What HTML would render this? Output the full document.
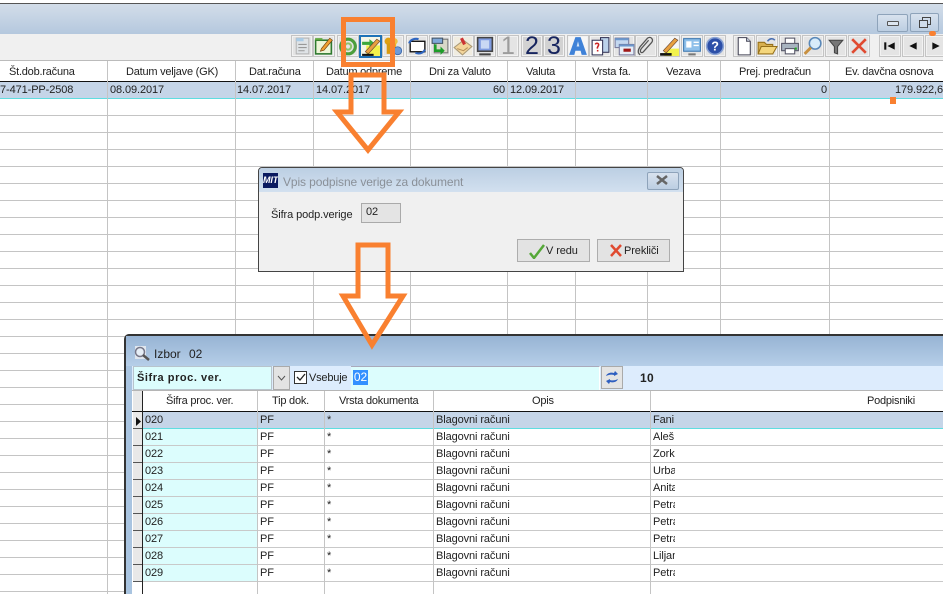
<!DOCTYPE html>
<html><head><meta charset="utf-8"><style>
html,body{margin:0;padding:0;background:#fff}
#p{position:relative;width:943px;height:594px;overflow:hidden;background:#fff;font:11px "Liberation Sans",sans-serif;color:#222;letter-spacing:-.1px}
#p div,#p svg,#p span{position:absolute}
.t{white-space:nowrap;line-height:14px}
.hd{letter-spacing:-.22px}
.n{width:22px;overflow:hidden}
.c{text-align:center}
.b{width:20px;height:20px;top:35px;background:#e4e4e4;border:1px solid #c4c4c4;box-shadow:inset 0 0 0 1px #f2f2f2}
.b svg{left:-1px;top:-1px;width:22px;height:22px}
.d{letter-spacing:0;font-size:25px;line-height:21px;text-align:center;overflow:hidden}
.v{width:1px;background:#c4c4c4}
.h{height:1px;background:#c4c4c4}
</style></head><body><div id="p">
<!-- top bar -->
<div style="left:0;top:0;width:943px;height:3px;background:#fff"></div>
<div style="left:0;top:3px;width:943px;height:1px;background:#555"></div>
<div style="left:0;top:4px;width:943px;height:30px;background:linear-gradient(#d3dde9,#b5c8de)"></div>
<div style="left:0;top:34px;width:943px;height:26px;background:#f0f0f0"></div>
<div style="left:0;top:60px;width:943px;height:1px;background:#bbb"></div>
<div style="left:877px;top:14px;width:29px;height:16px;border:1px solid #8ea3ba;border-radius:2px;background:linear-gradient(#d8e2ee,#bccee2)"></div>
<div style="left:887px;top:21px;width:10px;height:3px;border:1px solid #555;border-radius:1px;background:#dde6f0"></div>
<div style="left:910px;top:13px;width:27px;height:17px;border:1px solid #8ea3ba;border-radius:2px;background:linear-gradient(#d8e2ee,#bccee2)"></div>
<div style="left:922px;top:17px;width:7px;height:6px;border:1px solid #444"></div>
<div style="left:919px;top:20px;width:7px;height:6px;border:1px solid #444;background:#d0dcea"></div>
<!-- toolbar -->
<div class="b" style="left:291px"><svg viewBox="0 0 21 21"><rect x="5" y="3" width="12" height="15" fill="#dfe3e6" stroke="#b5b5b5"/><rect x="5" y="3" width="7" height="3" fill="#a9cbe6"/><path d="M7 9h8M7 12h8M7 15h6" stroke="#999"/></svg></div>
<div class="b" style="left:313px"><svg viewBox="0 0 21 21"><rect x="2.500" y="5" width="15" height="13" fill="#eef6d8" stroke="#2f7a2f" stroke-width="1.500"/><path d="M2 5h7V3H2z" fill="#5fa83f"/><path d="M8 13l8-10 2.500 2-8 9.500-3.500 1z" fill="#f0a030" stroke="#704010" stroke-width=".6"/></svg></div>
<div class="b" style="left:337px"><svg viewBox="0 0 21 21"><circle cx="10.500" cy="11" r="7" fill="none" stroke="#4c9e3c" stroke-width="3"/><circle cx="10.500" cy="11" r="3" fill="none" stroke="#8cc56c" stroke-width="2"/></svg></div>
<div class="b" style="left:359px;width:19px;height:19px;border:2px solid #1e72b8;background:#f6f6e8;box-shadow:none"><svg viewBox="0 0 21 21" style="left:-1px;top:-1px"><rect x="6" y="9" width="13" height="10" fill="#f2f24a"/><path d="M2 7h8" stroke="#3ca83c" stroke-width="3"/><path d="M9 3l5 4-5 4z" fill="#3ca83c"/><path d="M5 15L16 3l3 2L8 17z" fill="#e8a040" stroke="#643" stroke-width=".6"/><path d="M2 18h11" stroke="#111" stroke-width="2"/></svg></div>
<div class="b" style="left:382px"><svg viewBox="0 0 21 21"><circle cx="6" cy="6" r="3.500" fill="#e0a010"/><rect x="4.500" y="8" width="3.500" height="10" fill="#d89a10"/><circle cx="12" cy="6" r="3" fill="#f0c040"/><rect x="10.500" y="8" width="3" height="6" fill="#e8b428"/><circle cx="15" cy="15" r="3.800" fill="#6f9ad6" stroke="#3a66aa" stroke-width=".8"/></svg></div>
<div class="b" style="left:406px"><svg viewBox="0 0 21 21"><rect x="4" y="6" width="14" height="10" fill="#fff" stroke="#111" stroke-width="1.300"/><path d="M3 8c1-4 6-5 9-4M18 14c-2 4-6 4-9 3" fill="none" stroke="#2f66c0" stroke-width="2"/></svg></div>
<div class="b" style="left:429px"><svg viewBox="0 0 21 21"><path d="M5 4h13v13H5z" fill="#d8d8c8" stroke="#777"/><rect x="3" y="3" width="10" height="5" fill="#7fa8d8" stroke="#456"/><path d="M6 9v6h7" stroke="#1d9d2a" stroke-width="2.500" fill="none"/><path d="M11 11l4 4-4 4z" fill="#1d9d2a"/></svg></div>
<div class="b" style="left:452px;background:#f0ece0"><svg viewBox="0 0 21 21"><path d="M2 12l9-7 8 6-9 8z" fill="#f3d59a" stroke="#a97"/><path d="M9 3l3 6" stroke="#c33" stroke-width="3"/><path d="M5 13l6 2 4-3" stroke="#b8915a" fill="none"/></svg></div>
<div class="b" style="left:474px"><svg viewBox="0 0 21 21"><rect x="3.500" y="2.500" width="14" height="13" fill="#7f9be0" stroke="#444" stroke-width="1.500"/><rect x="6.500" y="5" width="8" height="8" fill="#c9d8f4"/><path d="M5 18.500h11" stroke="#444" stroke-width="2"/></svg></div>
<div class="b t d" style="left:497px;color:#9c9c9c">1</div>
<div class="b t d" style="left:521px;color:#16245e;background:#d2d2d2">2</div>
<div class="b t d" style="left:543px;color:#16245e;background:#d2d2d2">3</div>
<div class="b" style="left:567px;background:#f6f6f6"><svg viewBox="0 0 21 21"><path d="M2 19L8 2h5l6 17h-5l-1-4H8l-1 4z" fill="#3f82d8"/><path d="M9.200 11h2.600L10.500 6z" fill="#cfe2f8"/></svg></div>
<div class="b" style="left:589px"><svg viewBox="0 0 21 21"><rect x="11" y="2.500" width="8" height="14" fill="#bcd2ea" stroke="#335"/><rect x="3" y="5" width="10" height="14" fill="#fff" stroke="#335"/><path d="M6 9c1-2 4-1 3 1l-1 2v1" fill="none" stroke="#c22" stroke-width="1.500"/><path d="M7.500 15h1.500" stroke="#c22" stroke-width="1.500"/></svg></div>
<div class="b" style="left:613px"><svg viewBox="0 0 21 21"><rect x="2" y="3" width="13" height="9" fill="#c4d8f0" stroke="#779"/><rect x="2" y="3" width="13" height="2" fill="#6c97cc"/><rect x="6" y="9" width="14" height="10" fill="#e6eef8" stroke="#779"/><rect x="6" y="9" width="14" height="2" fill="#6c97cc"/><rect x="10" y="13" width="7" height="3" fill="#a01818"/></svg></div>
<div class="b" style="left:635px"><svg viewBox="0 0 21 21"><path d="M5 19c-3-2-2-5 0-8l7-8c3-2 6 1 4 4l-8 9c-2 2-4 0-2-3l7-8" fill="none" stroke="#555" stroke-width="1.200"/></svg></div>
<div class="b" style="left:658px;background:#f6f6f6"><svg viewBox="0 0 21 21"><rect x="6" y="13" width="14" height="7" fill="#f3f34c"/><path d="M5 15L16 3l3 2L8 17z" fill="#e8a040" stroke="#643" stroke-width=".6"/><path d="M2 18.500h11" stroke="#111" stroke-width="2.500"/></svg></div>
<div class="b" style="left:681px"><svg viewBox="0 0 21 21"><rect x="2.500" y="3.500" width="16" height="12" fill="#8fc0ea" stroke="#3a76b0"/><rect x="5" y="6" width="5" height="6" fill="#fff"/><path d="M12 7h5M12 10h5" stroke="#fff" stroke-width="1.300"/><path d="M7 18.500h7" stroke="#777" stroke-width="2"/></svg></div>
<div class="b" style="left:704px"><svg viewBox="0 0 21 21"><circle cx="10.500" cy="10.500" r="8" fill="#2c4fa8" stroke="#8aa3d4" stroke-width="1.500"/><text x="10.500" y="15" text-anchor="middle" font-family="Liberation Sans" font-weight="bold" font-size="12" fill="#fff">?</text></svg></div>
<div class="b" style="left:733px"><svg viewBox="0 0 21 21"><path d="M5 2.500h8l3.500 3.500v13H5z" fill="#fff" stroke="#445"/><path d="M13 2.500V6h3.500" fill="#d8e2f0" stroke="#445"/></svg></div>
<div class="b" style="left:756px"><svg viewBox="0 0 21 21"><path d="M2 7h6l2 2h6v9H2z" fill="#d8b050" stroke="#96701a"/><path d="M5 11h15l-4 7H2z" fill="#f4d67c" stroke="#96701a"/><path d="M11 6c2-3 5-3 7-1" fill="none" stroke="#4a6fb0" stroke-width="1.500"/></svg></div>
<div class="b" style="left:779px"><svg viewBox="0 0 21 21"><rect x="6" y="3" width="9" height="6" fill="#fff" stroke="#556"/><rect x="2.500" y="8" width="16" height="7" fill="#a8b4c0" stroke="#556"/><rect x="6" y="13" width="9" height="5" fill="#fff" stroke="#556"/><rect x="15" y="12" width="2" height="2" fill="#2a2"/></svg></div>
<div class="b" style="left:802px"><svg viewBox="0 0 21 21"><circle cx="12.500" cy="8" r="5.500" fill="#d8ecfa" stroke="#5a88b8" stroke-width="1.500"/><path d="M8.500 12l-6 6" stroke="#c89040" stroke-width="2.800"/></svg></div>
<div class="b" style="left:825px"><svg viewBox="0 0 21 21"><path d="M4 5h13l-5 6v7l-3-1v-6z" fill="#777" stroke="#444"/></svg></div>
<div class="b" style="left:848px"><svg viewBox="0 0 21 21"><path d="M4 4l13 13M17 4L4 17" stroke="#e04a30" stroke-width="2.500"/></svg></div>
<div class="b" style="left:879px"><svg viewBox="0 0 21 21"><path d="M6 7v7" stroke="#111" stroke-width="2"/><path d="M15 7v7l-7-3.500z" fill="#111"/></svg></div>
<div class="b" style="left:902px"><svg viewBox="0 0 21 21"><path d="M14 7v7l-7-3.500z" fill="#111"/></svg></div>
<div class="b" style="left:925px"><svg viewBox="0 0 21 21"><path d="M7 7v7l7-3.500z" fill="#111"/></svg></div>
<!-- top grid -->
<div style="left:0;top:61px;width:943px;height:20px;background:#fff"></div>
<div style="left:0;top:81px;width:943px;height:1px;background:#111"></div>
<div style="left:0;top:82px;width:943px;height:16px;background:#c5d5e8"></div>
<div style="left:0;top:98px;width:943px;height:1px;background:#5fdde0"></div>
<div style="left:0;top:99px;width:943px;height:495px;background:repeating-linear-gradient(#fff 0 16px,#c4c4c4 16px 17px)"></div>
<div class="v" style="left:107px;top:61px;height:533px"></div>
<div class="v" style="left:235px;top:61px;height:533px"></div>
<div class="v" style="left:313px;top:61px;height:533px"></div>
<div class="v" style="left:410px;top:61px;height:533px"></div>
<div class="v" style="left:507px;top:61px;height:533px"></div>
<div class="v" style="left:575px;top:61px;height:533px"></div>
<div class="v" style="left:647px;top:61px;height:533px"></div>
<div class="v" style="left:720px;top:61px;height:533px"></div>
<div class="v" style="left:829px;top:61px;height:533px"></div>
<div class="t hd" style="left:9px;top:65px">Št.dob.računa</div>
<div class="t hd" style="left:126px;top:65px">Datum veljave (GK)</div>
<div class="t hd" style="left:249px;top:65px">Dat.računa</div>
<div class="t hd" style="left:326px;top:65px">Datum odpreme</div>
<div class="t hd" style="left:429px;top:65px">Dni za Valuto</div>
<div class="t hd" style="left:526px;top:65px">Valuta</div>
<div class="t hd" style="left:592px;top:65px">Vrsta fa.</div>
<div class="t hd" style="left:666px;top:65px">Vezava</div>
<div class="t hd" style="left:739px;top:65px">Prej. predračun</div>
<div class="t hd" style="left:845px;top:65px">Ev. davčna osnova</div>
<div class="t" style="left:0;top:83px">7-471-PP-2508</div>
<div class="t" style="left:110px;top:83px">08.09.2017</div>
<div class="t" style="left:237px;top:83px">14.07.2017</div>
<div class="t" style="left:316px;top:83px">14.07.2017</div>
<div class="t" style="left:493px;top:83px">60</div>
<div class="t" style="left:510px;top:83px">12.09.2017</div>
<div class="t" style="left:821px;top:83px">0</div>
<div class="t" style="left:895px;top:83px">179.922,6</div>
<!-- dialog -->
<div style="left:258px;top:167px;width:424px;height:103px;border:1px solid #444;border-radius:4px 4px 0 0;background:#f0f0f0;overflow:hidden">
<div style="left:0;top:0;width:424px;height:24px;background:linear-gradient(#bccfe3,#d2e0ef)"></div>
</div>
<div class="t" style="left:263px;top:173px;width:15px;height:15px;background:#0a1a60;color:#fff;font:italic bold 9px/15px 'Liberation Sans',sans-serif;overflow:hidden">MIT</div>
<div class="t" style="left:283px;top:175px;font-size:12px;color:#8a9098">Vpis podpisne verige za dokument</div>
<div style="left:647px;top:172px;width:30px;height:16px;border:1px solid #8ea3ba;border-radius:2px;background:linear-gradient(#d8e2ee,#bccee2)"></div>
<svg style="left:655px;top:174px" width="14" height="12" viewBox="0 0 14 12"><path d="M2 2l10 8M12 2L2 10" stroke="#666" stroke-width="2.500"/></svg>
<div class="t" style="left:271px;top:208px">Šifra podp.verige</div>
<div class="t" style="left:361px;top:203px;width:38px;height:18px;border:1px solid #aaa;background:#e4e4e4;line-height:16px;text-indent:4px">02</div>
<div style="left:517px;top:239px;width:71px;height:21px;border:1px solid #adadad;background:#e3e3e3"></div>
<svg style="left:529px;top:243px" width="16" height="16" viewBox="0 0 16 16"><path d="M1 10l4 5L15 2" fill="none" stroke="#55a838" stroke-width="2.500"/></svg>
<div class="t" style="left:546px;top:244px">V redu</div>
<div style="left:597px;top:239px;width:71px;height:21px;border:1px solid #adadad;background:#e3e3e3"></div>
<svg style="left:609px;top:243px" width="14" height="15" viewBox="0 0 14 15"><path d="M2 2l10 11M12 2L2 13" stroke="#e04a30" stroke-width="2.500"/></svg>
<div class="t" style="left:624px;top:244px">Prekliči</div>
<!-- lower window -->
<div style="left:124px;top:334px;width:830px;height:270px;border:1px solid #333;border-width:2px 1px 1px 2px;border-radius:5px 5px 0 0;box-sizing:border-box;background:#a9c4e0"></div>
<div style="left:126px;top:336px;width:817px;height:30px;background:linear-gradient(#97b4d4,#b6cee8)"></div>
<svg style="left:134px;top:345px" width="17" height="17" viewBox="0 0 17 17"><rect x="1" y="1" width="11" height="13" fill="#dfe6ee"/><circle cx="6" cy="7" r="4.500" fill="#e6eef6" stroke="#778" stroke-width="1.500"/><path d="M9 10l6 5" stroke="#555" stroke-width="2.500"/></svg>
<div class="t" style="left:154px;top:347px;font-size:12px;letter-spacing:0">Izbor</div>
<div class="t" style="left:189px;top:347px;font-size:12px;letter-spacing:0">02</div>
<div style="left:132px;top:366px;width:811px;height:24px;background:#ddecfd"></div>
<div style="left:133px;top:366px;width:139px;height:24px;background:#dcfdfd;border:1px solid #b8c4cc;box-sizing:border-box"></div>
<div class="t" style="left:137px;top:371px;font-weight:bold;letter-spacing:.55px">Šifra proc. ver.</div>
<div style="left:273px;top:366px;width:17px;height:24px;background:#e3e3e3;border:1px solid #aaa;box-sizing:border-box"></div>
<svg style="left:276px;top:374px" width="11" height="8" viewBox="0 0 11 8"><path d="M2 2l3.500 4L9 2" fill="none" stroke="#555"/></svg>
<div style="left:294px;top:371px;width:11px;height:11px;border:1px solid #333;background:#fff"></div>
<svg style="left:295px;top:372px" width="11" height="11" viewBox="0 0 11 11"><path d="M2 5l3 3 5-6" fill="none" stroke="#222" stroke-width="1.300"/></svg>
<div class="t" style="left:309px;top:371px;letter-spacing:-.2px">Vsebuje</div>
<div style="left:351px;top:366px;width:249px;height:24px;background:#dcfdfd;border-top:1px solid #aab;border-right:1px solid #fff;box-sizing:border-box"></div>
<div class="t" style="left:353px;top:370px;width:15px;height:15px;background:#3390ff;color:#fff;font-size:12px;text-align:center">02</div>
<div style="left:601px;top:366px;width:22px;height:23px;background:#e4e4e4;border:1px solid #aaa;box-sizing:border-box"></div>
<svg style="left:604px;top:369px" width="16" height="17" viewBox="0 0 16 17"><path d="M2 7c1-3 5-4 8-3l1-2 3 3-4 2 0-1c-3-1-6 0-8 1z" fill="#2f5fc0"/><path d="M14 10c-1 3-5 4-8 3l-1 2-3-3 4-2 0 1c3 1 6 0 8-1z" fill="#2f5fc0"/></svg>
<div class="t" style="left:640px;top:371px;font-weight:bold;font-size:12px;letter-spacing:.3px">10</div>
<div style="left:132px;top:390px;width:811px;height:1px;background:#b5b5b5"></div>
<!-- lower grid -->
<div style="left:132px;top:391px;width:811px;height:203px;background:#fff"></div>
<div style="left:132px;top:391px;width:10px;height:203px;background:#fff"></div>
<div style="left:133px;top:391px;width:9px;height:20px;background:#e8e8e8"></div>
<div style="left:132px;top:411px;width:811px;height:1px;background:#111"></div>
<div style="left:143px;top:412px;width:800px;height:16px;background:#c5d5e8"></div>
<div style="left:143px;top:428px;width:800px;height:1px;background:#5fdde0"></div>
<div style="left:143px;top:429px;width:114px;height:152px;background:#dcfdfd"></div>
<div style="left:133px;top:412px;width:9px;height:170px;background:repeating-linear-gradient(#e8e8e8 0 16px,#555 16px 17px)"></div>
<svg style="left:135px;top:417px" width="7" height="9" viewBox="0 0 7 9"><path d="M1 0v9l5-4.500z" fill="#111"/></svg>
<div style="left:143px;top:429px;width:800px;height:165px;background:repeating-linear-gradient(transparent 0 16px,#c9c9c9 16px 17px)"></div>
<div style="left:142px;top:391px;width:1px;height:203px;background:#222"></div>
<div class="v" style="left:257px;top:391px;height:203px"></div>
<div class="v" style="left:324px;top:391px;height:203px"></div>
<div class="v" style="left:433px;top:391px;height:203px"></div>
<div class="v" style="left:650px;top:391px;height:203px"></div>
<div class="t hd" style="left:166px;top:394px">Šifra proc. ver.</div>
<div class="t hd" style="left:272px;top:394px">Tip dok.</div>
<div class="t hd" style="left:339px;top:394px">Vrsta dokumenta</div>
<div class="t hd" style="left:532px;top:394px">Opis</div>
<div class="t hd" style="left:867px;top:394px">Podpisniki</div>
<div class="t" style="left:145px;top:413px">020</div><div class="t" style="left:260px;top:413px">PF</div><div class="t" style="left:327px;top:413px">*</div><div class="t" style="left:436px;top:413px">Blagovni računi</div><div class="t n" style="left:653px;top:413px">Fani</div>
<div class="t" style="left:145px;top:430px">021</div><div class="t" style="left:260px;top:430px">PF</div><div class="t" style="left:327px;top:430px">*</div><div class="t" style="left:436px;top:430px">Blagovni računi</div><div class="t n" style="left:653px;top:430px">Aleš</div>
<div class="t" style="left:145px;top:447px">022</div><div class="t" style="left:260px;top:447px">PF</div><div class="t" style="left:327px;top:447px">*</div><div class="t" style="left:436px;top:447px">Blagovni računi</div><div class="t n" style="left:653px;top:447px">Zorka</div>
<div class="t" style="left:145px;top:464px">023</div><div class="t" style="left:260px;top:464px">PF</div><div class="t" style="left:327px;top:464px">*</div><div class="t" style="left:436px;top:464px">Blagovni računi</div><div class="t n" style="left:653px;top:464px">Urban</div>
<div class="t" style="left:145px;top:481px">024</div><div class="t" style="left:260px;top:481px">PF</div><div class="t" style="left:327px;top:481px">*</div><div class="t" style="left:436px;top:481px">Blagovni računi</div><div class="t n" style="left:653px;top:481px">Anita</div>
<div class="t" style="left:145px;top:498px">025</div><div class="t" style="left:260px;top:498px">PF</div><div class="t" style="left:327px;top:498px">*</div><div class="t" style="left:436px;top:498px">Blagovni računi</div><div class="t n" style="left:653px;top:498px">Petra</div>
<div class="t" style="left:145px;top:515px">026</div><div class="t" style="left:260px;top:515px">PF</div><div class="t" style="left:327px;top:515px">*</div><div class="t" style="left:436px;top:515px">Blagovni računi</div><div class="t n" style="left:653px;top:515px">Petra</div>
<div class="t" style="left:145px;top:532px">027</div><div class="t" style="left:260px;top:532px">PF</div><div class="t" style="left:327px;top:532px">*</div><div class="t" style="left:436px;top:532px">Blagovni računi</div><div class="t n" style="left:653px;top:532px">Petra</div>
<div class="t" style="left:145px;top:549px">028</div><div class="t" style="left:260px;top:549px">PF</div><div class="t" style="left:327px;top:549px">*</div><div class="t" style="left:436px;top:549px">Blagovni računi</div><div class="t n" style="left:653px;top:549px">Liljana</div>
<div class="t" style="left:145px;top:566px">029</div><div class="t" style="left:260px;top:566px">PF</div><div class="t" style="left:327px;top:566px">*</div><div class="t" style="left:436px;top:566px">Blagovni računi</div><div class="t n" style="left:653px;top:566px">Petra</div>
<!-- annotations -->
<div style="left:341px;top:17px;width:54px;height:50px;border:5px solid #f98030;box-sizing:border-box"></div>
<svg style="left:0;top:0" width="943" height="594" viewBox="0 0 943 594"><path d="M351 75H384V112H399L368 150L337 112H351Z" fill="none" stroke="#f98030" stroke-width="5"/><path d="M358 245H388V296H403L372 345L343 296H358Z" fill="none" stroke="#f98030" stroke-width="5"/></svg>
<div style="left:929px;top:31px;width:7px;height:5px;background:#f98030;border-radius:3px"></div>
<div style="left:890px;top:97px;width:6px;height:7px;background:#f98030"></div>
</div></body></html>
